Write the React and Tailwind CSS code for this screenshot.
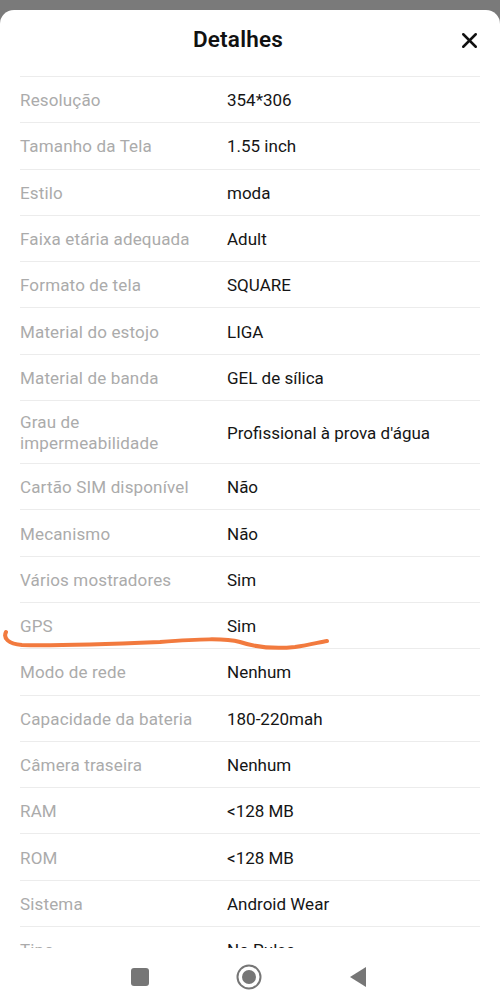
import { X } from 'lucide-react';

const rows = [
  ['Resolução', '354*306'],
  ['Tamanho da Tela', '1.55 inch'],
  ['Estilo', 'moda'],
  ['Faixa etária adequada', 'Adult'],
  ['Formato de tela', 'SQUARE'],
  ['Material do estojo', 'LIGA'],
  ['Material de banda', 'GEL de sílica'],
  ['Grau de impermeabilidade', "Profissional à prova d'água"],
  ['Cartão SIM disponível', 'Não'],
  ['Mecanismo', 'Não'],
  ['Vários mostradores', 'Sim'],
  ['GPS', 'Sim'],
  ['Modo de rede', 'Nenhum'],
  ['Capacidade da bateria', '180-220mah'],
  ['Câmera traseira', 'Nenhum'],
  ['RAM', '<128 MB'],
  ['ROM', '<128 MB'],
  ['Sistema', 'Android Wear'],
  ['Tipo', 'No Pulse'],
];

export default function App() {
  return (
    <div className="h-[1007px] w-[500px] flex flex-col bg-[#7a7a7a] overflow-hidden font-['Roboto',sans-serif]">
      <div className="h-[10px] shrink-0" />
      <div className="relative flex-1 min-h-0 bg-white rounded-t-[14px] overflow-hidden">
        <div className="mx-5 h-[67px] flex items-center justify-center pr-[24px] border-b border-[#ececec] relative">
          <h1 className="text-[22.5px] font-semibold text-[#111] -mt-[6px] tracking-[0.2px]">Detalhes</h1>
          <X className="absolute right-[-2px] top-[18px] w-[25px] h-[25px] text-[#111]" strokeWidth={2.4} />
        </div>
        <div className="mx-5">
          {rows.map(([label, value]) => (
            <div key={label} className="flex items-center min-h-[46.3px] pt-[11px] pb-[9px] border-b border-[#ececec] text-[17px] leading-[21px]">
              <div className="w-[207px] pr-5 shrink-0 text-[#ababab] tracking-[0.15px]">{label}</div>
              <div className="text-[#151515]">{value}</div>
            </div>
          ))}
        </div>
        <svg className="absolute left-0 top-[612px] pointer-events-none" width="340" height="40" viewBox="0 0 340 40">
          <path
            d="M6 10 C 3 16, 8 22, 22 23 C 60 24, 110 22, 160 20 C 200 17, 225 16, 240 20 C 255 25, 275 27, 295 25 C 310 23, 320 20, 327 19"
            fill="none"
            stroke="#f27a3e"
            strokeWidth="4"
            strokeLinecap="round"
          />
        </svg>
      </div>
      <div className="h-[59px] shrink-0 bg-white flex items-center justify-center gap-[87px] pb-[2px] pr-[3px]">
        <div className="w-[18px] h-[18px] rounded-[3px] bg-[#767676]" />
        <svg width="26" height="26" viewBox="0 0 26 26">
          <circle cx="13" cy="13" r="11.5" fill="none" stroke="#767676" strokeWidth="2" />
          <circle cx="13" cy="13" r="7" fill="#767676" />
        </svg>
        <svg width="18" height="22" viewBox="0 0 18 22">
          <path d="M17 1 L17 21 L1 11 Z" fill="#767676" />
        </svg>
      </div>
    </div>
  );
}
